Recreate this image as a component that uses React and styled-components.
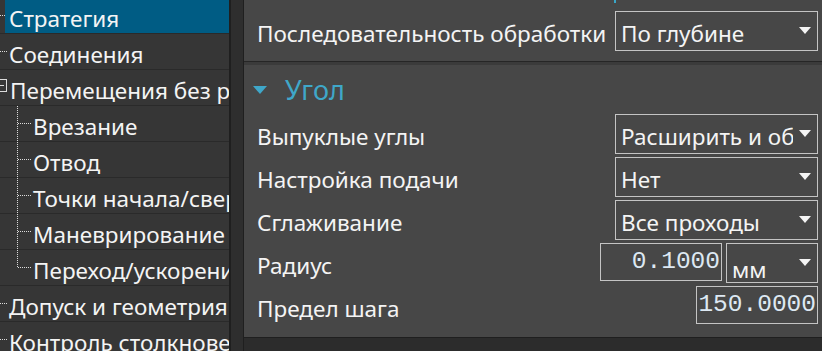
import React from "react";
import styled, { createGlobalStyle } from "styled-components";

const Global = createGlobalStyle`
  html, body {
    margin: 0;
    padding: 0;
    background: #474747;
    overflow: hidden;
  }
  * { box-sizing: border-box; }
`;

const Page = styled.div`
  display: flex;
  width: 822px;
  height: 351px;
  font-family: "Noto Sans", "Open Sans", sans-serif;
  font-size: 22.5px;
  line-height: 1.2;
  color: #f4f4f4;
  overflow: hidden;
`;

const TreePanel = styled.div`
  width: 229px;
  flex: none;
  background: #363636;
  overflow: hidden;
`;

const TreeList = styled.div`
  margin-top: -2px;
`;

const TreeRow = styled.div`
  display: flex;
  align-items: center;
  height: 36px;
  border-bottom: 1px solid #2a2a2a;
  white-space: nowrap;
  overflow: hidden;
`;

const Label = styled.span`
  flex: 1;
  height: 100%;
  display: flex;
  align-items: center;
  padding-top: 6px;
  background: ${(p) => (p.$selected ? "#005c84" : "transparent")};
  margin-left: ${(p) => (p.$selected ? "-3px" : "0")};
  padding-left: ${(p) => (p.$selected ? "4px" : "1px")};
  overflow: hidden;
`;

const Splitter = styled.div`
  width: 15px;
  flex: none;
  background: #2e2e2e;
  border-left: 2px solid #1f1f1f;
  border-right: 1px solid #1f1f1f;
`;

const Props = styled.div`
  flex: 1;
  display: flex;
  flex-direction: column;
  background: #474747;
  min-width: 0;
`;

const TopSection = styled.div`
  position: relative;
  height: 62px;
  display: flex;
  align-items: center;
  padding: 0 4px 0 13px;
  justify-content: space-between;
  border-bottom: 1px solid #262626;
  white-space: nowrap;
`;

const AccentTick = styled.div`
  position: absolute;
  top: 0;
  left: 370px;
  width: 2px;
  height: 3px;
  background: #3aa7c9;
`;

const Band = styled.div`
  height: 3px;
  background: #3b3b3b;
`;

const SectionHead = styled.div`
  display: flex;
  align-items: center;
  gap: 18px;
  height: 49px;
  padding-left: 9px;
  padding-top: 2px;
  color: #3fa7c9;
  font-size: 27px;
`;

const Rows = styled.div`
  display: flex;
  flex-direction: column;
  gap: 4px;
  padding: 0 4px 0 13px;
  flex: 1;
`;

const Row = styled.div`
  display: flex;
  align-items: center;
  justify-content: space-between;
  height: ${(p) => p.$h || 39}px;
`;

const FieldLabel = styled.span`
  padding-top: 6px;
  white-space: nowrap;
`;

const Controls = styled.div`
  display: flex;
  align-items: flex-start;
  gap: 4px;
  height: 100%;
`;

const Select = styled.div`
  display: flex;
  align-items: center;
  flex: none;
  width: ${(p) => p.$w || 203}px;
  height: ${(p) => p.$h || 40}px;
  border: 1px solid #c4c4c4;
  padding: 0 6px 0 5px;
  background: #474747;
`;

const SelectText = styled.span`
  flex: 1;
  overflow: hidden;
  white-space: nowrap;
  margin-right: 6px;
  padding-top: ${(p) => (p.$low ? "12px" : "6px")};
  color: #f4f4f4;
`;

const NumBox = styled.div`
  display: flex;
  align-items: center;
  justify-content: flex-end;
  flex: none;
  width: 122px;
  height: 38px;
  border: 1px solid #c4c4c4;
  padding-right: 1px;
  font-family: "Liberation Mono", "Courier New", monospace;
  font-size: 24.5px;
  color: #dde8f2;
`;

const Footer = styled.div`
  height: 14px;
  flex: none;
  background: #2c2c2c;
  border-top: 1px solid #1f1f1f;
`;

const Arrow = () => (
  <svg width="12" height="8" viewBox="0 0 12 8">
    <path d="M0 0 H12 L6 7 Z" fill="#f4f4f4" />
  </svg>
);

const Connector = ({ kind }) => {
  const dot = { stroke: "#dcdcdc", strokeWidth: 1, strokeDasharray: "1 1" };
  if (kind === "top")
    return (
      <svg width="8" height="36" style={{ flex: "none" }}>
        <line x1="0" y1="17.5" x2="7" y2="17.5" {...dot} />
      </svg>
    );
  if (kind === "box")
    return (
      <svg width="9" height="36" style={{ flex: "none" }}>
        <rect x="-4.5" y="9.5" width="11" height="12" fill="none" stroke="#dcdcdc" />
        <line x1="-2" y1="15.5" x2="4" y2="15.5" stroke="#dcdcdc" />
      </svg>
    );
  const last = kind === "last";
  return (
    <svg width="32" height="36" style={{ flex: "none" }}>
      <line x1="17.5" y1="0" x2="17.5" y2={last ? 17.5 : 36} {...dot} />
      <line x1="18" y1="17.5" x2="31" y2="17.5" {...dot} />
    </svg>
  );
};

const tree = [
  { text: "Стратегия", kind: "top", selected: true },
  { text: "Соединения", kind: "top" },
  { text: "Перемещения без резания", kind: "box" },
  { text: "Врезание", kind: "child" },
  { text: "Отвод", kind: "child" },
  { text: "Точки начала/свертывания", kind: "child" },
  { text: "Маневрирование", kind: "child" },
  { text: "Переход/ускорение", kind: "last" },
  { text: "Допуск и геометрия", kind: "top" },
  { text: "Контроль столкновений", kind: "top" },
];

const Dropdown = ({ value, w, h, low }) => (
  <Select $w={w} $h={h}>
    <SelectText $low={low}>{value}</SelectText>
    <Arrow />
  </Select>
);

export default function App() {
  return (
    <Page>
      <Global />
      <TreePanel>
        <TreeList>
          {tree.map((t) => (
            <TreeRow key={t.text}>
              <Connector kind={t.kind} />
              <Label $selected={t.selected}>{t.text}</Label>
            </TreeRow>
          ))}
        </TreeList>
      </TreePanel>
      <Splitter />
      <Props>
        <TopSection>
          <AccentTick />
          <FieldLabel>Последовательность обработки</FieldLabel>
          <Dropdown value="По глубине" />
        </TopSection>
        <Band />
        <SectionHead>
          <svg width="14" height="9" viewBox="0 0 14 9">
            <path d="M0 0 H14 L7 8 Z" fill="#3fa7c9" />
          </svg>
          Угол
        </SectionHead>
        <Rows>
          <Row>
            <FieldLabel>Выпуклые углы</FieldLabel>
            <Dropdown value="Расширить и обрезать" />
          </Row>
          <Row>
            <FieldLabel>Настройка подачи</FieldLabel>
            <Dropdown value="Нет" />
          </Row>
          <Row>
            <FieldLabel>Сглаживание</FieldLabel>
            <Dropdown value="Все проходы" />
          </Row>
          <Row>
            <FieldLabel>Радиус</FieldLabel>
            <Controls>
              <NumBox>0.1000</NumBox>
              <Dropdown value="мм" w={92} low />
            </Controls>
          </Row>
          <Row $h={38}>
            <FieldLabel>Предел шага</FieldLabel>
            <NumBox>150.0000</NumBox>
          </Row>
        </Rows>
        <Footer />
      </Props>
    </Page>
  );
}
